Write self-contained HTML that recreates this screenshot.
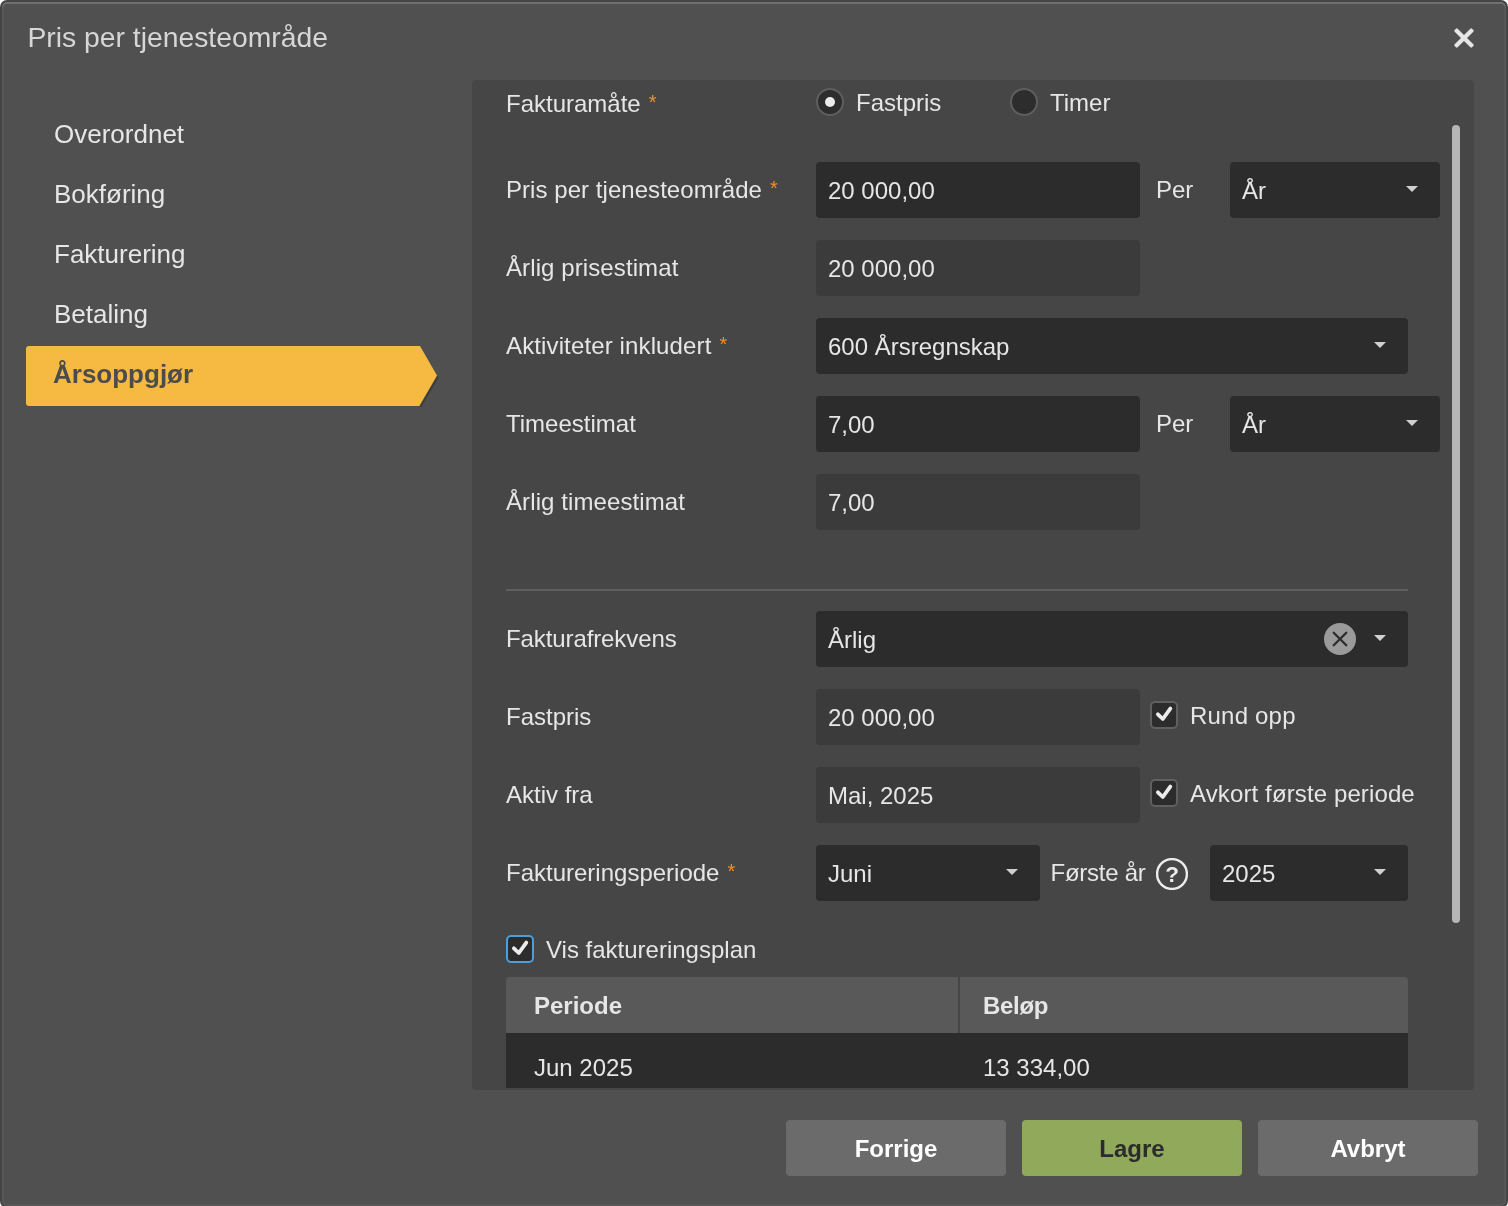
<!DOCTYPE html>
<html lang="no">
<head>
<meta charset="utf-8">
<title>Pris per tjenesteområde</title>
<style>
*{box-sizing:border-box;margin:0;padding:0}
html,body{width:1508px;height:1206px;overflow:hidden;background:#fff;font-family:"Liberation Sans",sans-serif;color:#e6e6e6}
#dlg{position:absolute;left:0;top:0;width:1508px;height:1208px;background:#505050;border:2px solid #454545;border-radius:7px;box-shadow:inset 0 2px 0 #707070,inset 2px 0 0 #575757,inset -2px 0 0 #575757,inset 0 -2px 0 #575757}
#wrap{position:absolute;left:0;top:0;width:1508px;height:1206px;will-change:transform}
.abs{position:absolute;white-space:nowrap}
#title{left:27.5px;top:17px;height:40px;line-height:40px;font-size:28.3px;color:#d6d6d6}
.nav{left:54px;height:60px;line-height:60px;font-size:26px;color:#e6e6e6}
#active{left:26px;top:346px;width:412px;height:60px}
#panel{position:absolute;left:472px;top:80px;width:1002px;height:1010px;background:#464646;border-radius:4px;overflow:hidden}
.lbl{left:34px;height:56px;line-height:56px;font-size:24px;color:#e6e6e6}
.req{color:#ee902a;margin-left:8px;position:relative;top:-3px;font-size:20px}
.inp{height:56px;line-height:58px;font-size:24px;background:#2c2c2c;border-radius:4px;padding-left:12px;color:#e6e6e6}
.dis{background:#3b3b3b}
.arrow{position:absolute;width:0;height:0;border-left:6.5px solid transparent;border-right:6.5px solid transparent;border-top:6.5px solid #d0d0d0}
.radio{width:28px;height:28px;border-radius:50%;background:#2d2d2d;border:2px solid #5e5e5e}
.radio.on:after{content:"";position:absolute;left:7px;top:7px;width:10px;height:10px;border-radius:50%;background:#ececec}
.chk{width:28px;height:28px;border-radius:5px;background:#2c2c2c;border:2px solid #606060}
.chk svg{position:absolute;left:-2px;top:-2px}
.txt{height:56px;line-height:56px;font-size:24px;color:#e6e6e6}
.btn{top:1120px;width:220px;height:56px;line-height:58px;border-radius:4px;background:#6b6b6b;color:#fff;font-weight:bold;font-size:24px;text-align:center}
</style>
</head>
<body>
<div id="dlg"></div>
<div id="wrap">

<div id="title" class="abs">Pris per tjenesteområde</div>
<svg class="abs" style="left:1452.3px;top:26px" width="24" height="24" viewBox="0 0 24 24"><g fill="#e6e6e6"><rect x="-0.3" y="9.9" width="24.6" height="4.2" rx="1.2" transform="rotate(45 12 12)"/><rect x="-0.3" y="9.9" width="24.6" height="4.2" rx="1.2" transform="rotate(-45 12 12)"/></g></svg>

<div class="abs nav" style="top:104px">Overordnet</div>
<div class="abs nav" style="top:164px">Bokføring</div>
<div class="abs nav" style="top:224px">Fakturering</div>
<div class="abs nav" style="top:284px">Betaling</div>
<svg id="active" class="abs" viewBox="0 0 412 60" style="overflow:visible"><path d="M412.2 30.3 L394.5 60.8" stroke="#333" stroke-opacity=".75" stroke-width="1.6" fill="none"/><path d="M3 0 H394 L411 29.5 L393.3 60 H3 Q0 60 0 57 V3 Q0 0 3 0 Z" fill="#f6b942"/></svg>
<div class="abs nav" style="left:53px;top:343.5px;color:#4c4c4c;font-weight:bold">Årsoppgjør</div>

<div id="panel">
  <!-- row 0 -->
  <div class="abs lbl" style="top:-4px">Fakturamåte<span class="req">*</span></div>
  <div class="abs radio on" style="left:344px;top:8px"></div>
  <div class="abs txt" style="left:384px;top:-5px">Fastpris</div>
  <div class="abs radio" style="left:538px;top:8px"></div>
  <div class="abs txt" style="left:578px;top:-5px">Timer</div>

  <!-- row 1 -->
  <div class="abs lbl" style="top:82px;letter-spacing:.05px">Pris per tjenesteområde<span class="req">*</span></div>
  <div class="abs inp" style="left:344px;top:82px;width:324px">20 000,00</div>
  <div class="abs txt" style="left:684px;top:82px">Per</div>
  <div class="abs inp" style="left:758px;top:82px;width:210px">År<i class="arrow" style="left:176px;top:24px"></i></div>

  <!-- row 2 -->
  <div class="abs lbl" style="top:160px;letter-spacing:.1px">Årlig prisestimat</div>
  <div class="abs inp dis" style="left:344px;top:160px;width:324px">20 000,00</div>

  <!-- row 3 -->
  <div class="abs lbl" style="top:238px;letter-spacing:.13px">Aktiviteter inkludert<span class="req">*</span></div>
  <div class="abs inp" style="left:344px;top:238px;width:592px">600 Årsregnskap<i class="arrow" style="left:558px;top:24px"></i></div>

  <!-- row 4 -->
  <div class="abs lbl" style="top:316px">Timeestimat</div>
  <div class="abs inp" style="left:344px;top:316px;width:324px">7,00</div>
  <div class="abs txt" style="left:684px;top:316px">Per</div>
  <div class="abs inp" style="left:758px;top:316px;width:210px">År<i class="arrow" style="left:176px;top:24px"></i></div>

  <!-- row 5 -->
  <div class="abs lbl" style="top:394px;letter-spacing:.1px">Årlig timeestimat</div>
  <div class="abs inp dis" style="left:344px;top:394px;width:324px">7,00</div>

  <!-- separator -->
  <div class="abs" style="left:34px;top:509px;width:902px;height:2px;background:#5e5e5e"></div>

  <!-- row 6 -->
  <div class="abs lbl" style="top:531px;letter-spacing:-.1px">Fakturafrekvens</div>
  <div class="abs inp" style="left:344px;top:531px;width:592px">Årlig
    <svg class="abs" style="left:508px;top:12px" width="32" height="32" viewBox="0 0 32 32"><circle cx="16" cy="16" r="16" fill="#9a9a9a"/><path d="M9.7 9.7 L22.3 22.3 M22.3 9.7 L9.7 22.3" stroke="#2c2c2c" stroke-width="2.3" stroke-linecap="round" fill="none"/></svg>
    <i class="arrow" style="left:558px;top:24px"></i></div>

  <!-- row 7 -->
  <div class="abs lbl" style="top:609px">Fastpris</div>
  <div class="abs inp dis" style="left:344px;top:609px;width:324px">20 000,00</div>
  <div class="abs chk" style="left:678px;top:621px"><svg width="28" height="28" viewBox="0 0 28 28"><path d="M7.9 13.3 L12.8 18 L20.3 7.6" stroke="#ececec" stroke-width="3.8" stroke-linecap="round" stroke-linejoin="round" fill="none"/></svg></div>
  <div class="abs txt" style="left:718px;top:608px;letter-spacing:.2px">Rund opp</div>

  <!-- row 8 -->
  <div class="abs lbl" style="top:687px">Aktiv fra</div>
  <div class="abs inp dis" style="left:344px;top:687px;width:324px">Mai, 2025</div>
  <div class="abs chk" style="left:678px;top:699px"><svg width="28" height="28" viewBox="0 0 28 28"><path d="M7.9 13.3 L12.8 18 L20.3 7.6" stroke="#ececec" stroke-width="3.8" stroke-linecap="round" stroke-linejoin="round" fill="none"/></svg></div>
  <div class="abs txt" style="left:718px;top:686px;letter-spacing:.12px">Avkort første periode</div>

  <!-- row 9 -->
  <div class="abs lbl" style="top:765px">Faktureringsperiode<span class="req">*</span></div>
  <div class="abs inp" style="left:344px;top:765px;width:224px">Juni<i class="arrow" style="left:190px;top:24px"></i></div>
  <div class="abs txt" style="left:578.5px;top:765px;letter-spacing:-.25px">Første år</div>
  <svg class="abs" style="left:684px;top:778px" width="32" height="32" viewBox="0 0 32 32"><circle cx="16" cy="16" r="14.9" fill="none" stroke="#ececec" stroke-width="2.4"/><text x="16" y="23.6" text-anchor="middle" font-family="Liberation Sans, sans-serif" font-weight="bold" font-size="22.5" fill="#ececec">?</text></svg>
  <div class="abs inp" style="left:738px;top:765px;width:198px">2025<i class="arrow" style="left:164px;top:24px"></i></div>

  <!-- show plan -->
  <div class="abs chk" style="left:34px;top:855px;border-color:#4a9fdc"><svg width="28" height="28" viewBox="0 0 28 28"><path d="M7.9 13.3 L12.8 18 L20.3 7.6" stroke="#ececec" stroke-width="3.8" stroke-linecap="round" stroke-linejoin="round" fill="none"/></svg></div>
  <div class="abs txt" style="left:74px;top:842px">Vis faktureringsplan</div>

  <!-- table -->
  <div class="abs" style="left:34px;top:897px;width:902px;height:56px;background:#595959;border-radius:4px 4px 0 0"></div>
  <div class="abs" style="left:486px;top:897px;width:2px;height:56px;background:#464646"></div>
  <div class="abs txt" style="left:62px;top:898px;font-weight:bold">Periode</div>
  <div class="abs txt" style="left:511px;top:898px;font-weight:bold;letter-spacing:-.3px">Beløp</div>
  <div class="abs" style="left:34px;top:953px;width:902px;height:55px;background:#2c2c2c"></div>
  <div class="abs txt" style="left:62px;top:960px">Jun 2025</div>
  <div class="abs txt" style="left:511px;top:960px">13 334,00</div>

  <!-- scrollbar -->
  <div class="abs" style="left:980px;top:45px;width:8px;height:798px;border-radius:4px;background:#b6b6b6"></div>
</div>

<div class="abs btn" style="left:786px">Forrige</div>
<div class="abs btn" style="left:1022px;background:#90a95b;color:#2c2c2c">Lagre</div>
<div class="abs btn" style="left:1258px">Avbryt</div>
</div>
</body>
</html>
